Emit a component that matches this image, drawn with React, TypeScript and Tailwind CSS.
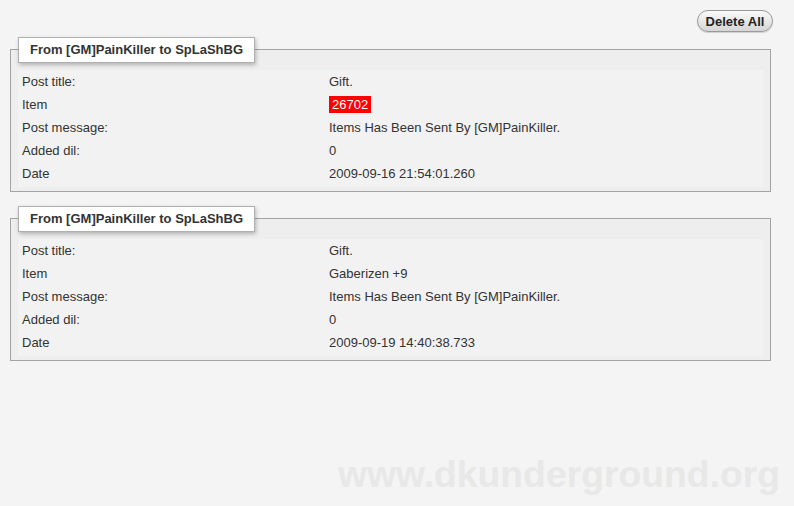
import React from "react";

type Row = { label: string; value: React.ReactNode };

const mails: { from: string; rows: Row[] }[] = [
  {
    from: "From [GM]PainKiller to SpLaShBG",
    rows: [
      { label: "Post title:", value: "Gift." },
      {
        label: "Item",
        value: (
          <span className="bg-[#ff0000] text-white px-[3px] py-[1px]">26702</span>
        ),
      },
      { label: "Post message:", value: "Items Has Been Sent By [GM]PainKiller." },
      { label: "Added dil:", value: "0" },
      { label: "Date", value: "2009-09-16 21:54:01.260" },
    ],
  },
  {
    from: "From [GM]PainKiller to SpLaShBG",
    rows: [
      { label: "Post title:", value: "Gift." },
      { label: "Item", value: "Gaberizen +9" },
      { label: "Post message:", value: "Items Has Been Sent By [GM]PainKiller." },
      { label: "Added dil:", value: "0" },
      { label: "Date", value: "2009-09-19 14:40:38.733" },
    ],
  },
];

function Mail({ from, rows }: { from: string; rows: Row[] }) {
  return (
    <div className="relative border border-[#a4a4a4] bg-[#eeeeee] pt-[20px] pb-[4px] px-[7px]">
      <div className="absolute left-[7px] top-[-13px] h-[26px] w-[237px] bg-white border border-[#b0b0b0] shadow-[1px_2px_4px_rgba(0,0,0,0.25)] flex items-center pl-[11px] font-bold text-[13px] text-[#333]">
        {from}
      </div>
      <div className="bg-[#f2f2f2] pb-[2px]">
        {rows.map((r, i) => (
          <div key={i} className="flex h-[23px] items-center text-[13px] text-[#333]">
            <div className="w-[311px] pl-[4px]">{r.label}</div>
            <div>{r.value}</div>
          </div>
        ))}
      </div>
    </div>
  );
}

export default function App() {
  return (
    <div
      className="relative h-[506px] w-[794px] overflow-hidden bg-[#f4f4f4] px-[10px]"
      style={{ fontFamily: '"Liberation Sans", Arial, sans-serif' }}
    >
      <div className="flex justify-end pt-[10px] pr-[11px]">
        <button className="h-[22px] w-[76px] rounded-full border border-[#9a9a9a] bg-gradient-to-b from-[#fafafa] to-[#d6d6d6] text-[13px] font-bold text-[#222] leading-none shadow-[0_1px_1px_rgba(0,0,0,0.15)]">
          Delete All
        </button>
      </div>
      <div className="mr-[13px] mt-[17px] flex flex-col gap-[26px]">
        {mails.map((m, i) => (
          <Mail key={i} from={m.from} rows={m.rows} />
        ))}
      </div>
      <div className="absolute left-[338px] top-[456px] text-[37.3px] font-bold leading-none text-[#e8e8e8] whitespace-nowrap">
        www.dkunderground.org
      </div>
    </div>
  );
}
